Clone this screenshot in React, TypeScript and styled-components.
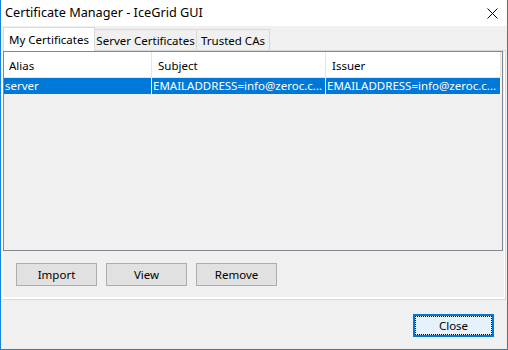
import React from "react";
import styled, { createGlobalStyle } from "styled-components";

const Global = createGlobalStyle`
  html, body { margin: 0; padding: 0; background: #f0f0f0; }
  body {
    font-family: "Noto Sans", "Open Sans", sans-serif;
    font-size: 11px;
    color: #000;
  }
  * { box-sizing: border-box; }
`;

const Window = styled.div`
  width: 508px;
  height: 350px;
  display: flex;
  flex-direction: column;
  background: #f0f0f0;
  border: 1px solid #1883d7;
  border-top: none;
`;

const TitleBar = styled.div`
  height: 26px;
  flex: none;
  background: #fff;
  display: flex;
  align-items: center;
  justify-content: space-between;
  padding-left: 4px;
`;

const TitleText = styled.span`
  font-size: 12.7px;
  line-height: 1;
  padding-bottom: 1px;
`;

const CloseGlyph = styled.div`
  width: 30px;
  height: 26px;
  display: flex;
  align-items: center;
  justify-content: center;
`;

const Body = styled.div`
  flex: 1;
  display: flex;
  flex-direction: column;
  padding: 1px 1px 0 1px;
`;

const TabRow = styled.div`
  display: flex;
  align-items: flex-end;
  height: 23px;
  padding-left: 1px;
`;

const Tab = styled.div<{ $active?: boolean; $w: number; $first?: boolean }>`
  width: ${(p) => p.$w}px;
  height: ${(p) => (p.$active ? 24 : 21)}px;
  margin-bottom: ${(p) => (p.$active ? -1 : 0)}px;
  position: relative;
  z-index: ${(p) => (p.$active ? 1 : 0)};
  background: ${(p) => (p.$active ? "#ffffff" : "#f0f0f0")};
  border: 1px solid #d9d9d9;
  border-bottom: none;
  border-left: ${(p) => (p.$first || p.$active ? "1px solid #d9d9d9" : "none")};
  display: flex;
  align-items: center;
  padding-bottom: ${(p) => (p.$active ? 1 : 0)}px;
  justify-content: center;
  font-size: 11.5px;
  white-space: nowrap;
`;

const Panel = styled.div`
  height: 250px;
  flex: none;
  display: flex;
  flex-direction: column;
  border-top: 1px solid #d9d9d9;
  border-left: 1px solid #ffffff;
  border-right: 1px solid #d9d9d9;
  border-bottom: 1px solid #d9d9d9;
  box-shadow: inset -1px -2px 0 #ffffff;
`;

const TableBox = styled.div`
  width: 500px;
  height: 200px;
  border: 1px solid #828790;
  background: #f0f0f0;
  display: flex;
  flex-direction: column;
`;

const HeaderRow = styled.div`
  display: flex;
  height: 26px;
  border-bottom: 1px solid #e5e5e5;
  background: #fff;
  width: 497px;
`;

const HeaderCell = styled.div<{ $pad: number; $w: number }>`
  width: ${(p) => p.$w}px;
  border-right: 1px solid #e5e5e5;
  display: flex;
  align-items: center;
  padding: 2px 0 0 ${(p) => p.$pad}px;
  font-size: 11.5px;
`;

const DataRow = styled.div<{ $selected?: boolean }>`
  display: flex;
  height: 16px;
  width: 497px;
  background: ${(p) => (p.$selected ? "#0078d7" : "#fff")};
  color: ${(p) => (p.$selected ? "#fff" : "#000")};
`;

const DataCell = styled.div<{ $w: number }>`
  width: ${(p) => p.$w}px;
  border-right: 1px solid #ffffff;
  padding-left: 1px;
  line-height: 16px;
  font-size: 11.5px;
  white-space: nowrap;
  overflow: hidden;
`;

const ButtonRow = styled.div`
  display: flex;
  gap: 9px;
  padding-left: 13px;
  margin-top: 12px;
`;

const Button = styled.button`
  width: 81px;
  height: 23px;
  padding: 0;
  background: #e1e1e1;
  border: 1px solid #adadad;
  font-family: "Noto Sans", "Open Sans", sans-serif;
  font-size: 11.5px;
  color: #000;
`;

const Footer = styled.div`
  flex: 1;
  display: flex;
  justify-content: flex-end;
  align-items: flex-start;
  padding-top: 14px;
  padding-right: 12px;
`;

const DefaultButton = styled.button`
  position: relative;
  width: 81px;
  height: 23px;
  padding: 0;
  background: #e5f1fb;
  border: 1px solid #0078d7;
  box-shadow: inset 0 0 0 1px #0078d7;
  font-family: "Noto Sans", "Open Sans", sans-serif;
  font-size: 11.5px;
  color: #000;
  &::after {
    content: "";
    position: absolute;
    inset: 1px;
    border: 1px dotted #000;
  }
`;

const cols = [148, 174, 175];

export default function App() {
  return (
    <>
      <Global />
      <Window>
        <TitleBar>
          <TitleText>Certificate Manager - IceGrid GUI</TitleText>
          <CloseGlyph>
            <svg width="11" height="11" viewBox="0 0 11 11">
              <path d="M0.5 0.5 L10.5 10.5 M10.5 0.5 L0.5 10.5" stroke="#000" strokeWidth="1" fill="none" />
            </svg>
          </CloseGlyph>
        </TitleBar>
        <Body>
          <TabRow>
            <Tab $active $first $w={92}>My Certificates</Tab>
            <Tab $w={102}>Server Certificates</Tab>
            <Tab $w={73}>Trusted CAs</Tab>
          </TabRow>
          <Panel>
            <TableBox>
              <HeaderRow>
                <HeaderCell $w={cols[0]} $pad={5}>Alias</HeaderCell>
                <HeaderCell $w={cols[1]} $pad={6}>Subject</HeaderCell>
                <HeaderCell $w={cols[2]} $pad={6}>Issuer</HeaderCell>
              </HeaderRow>
              <DataRow $selected>
                <DataCell $w={cols[0]}>server</DataCell>
                <DataCell $w={cols[1]}>EMAILADDRESS=info@zeroc.c...</DataCell>
                <DataCell $w={cols[2]}>EMAILADDRESS=info@zeroc.c...</DataCell>
              </DataRow>
            </TableBox>
            <ButtonRow>
              <Button>Import</Button>
              <Button>View</Button>
              <Button>Remove</Button>
            </ButtonRow>
          </Panel>
          <Footer>
            <DefaultButton>Close</DefaultButton>
          </Footer>
        </Body>
      </Window>
    </>
  );
}
